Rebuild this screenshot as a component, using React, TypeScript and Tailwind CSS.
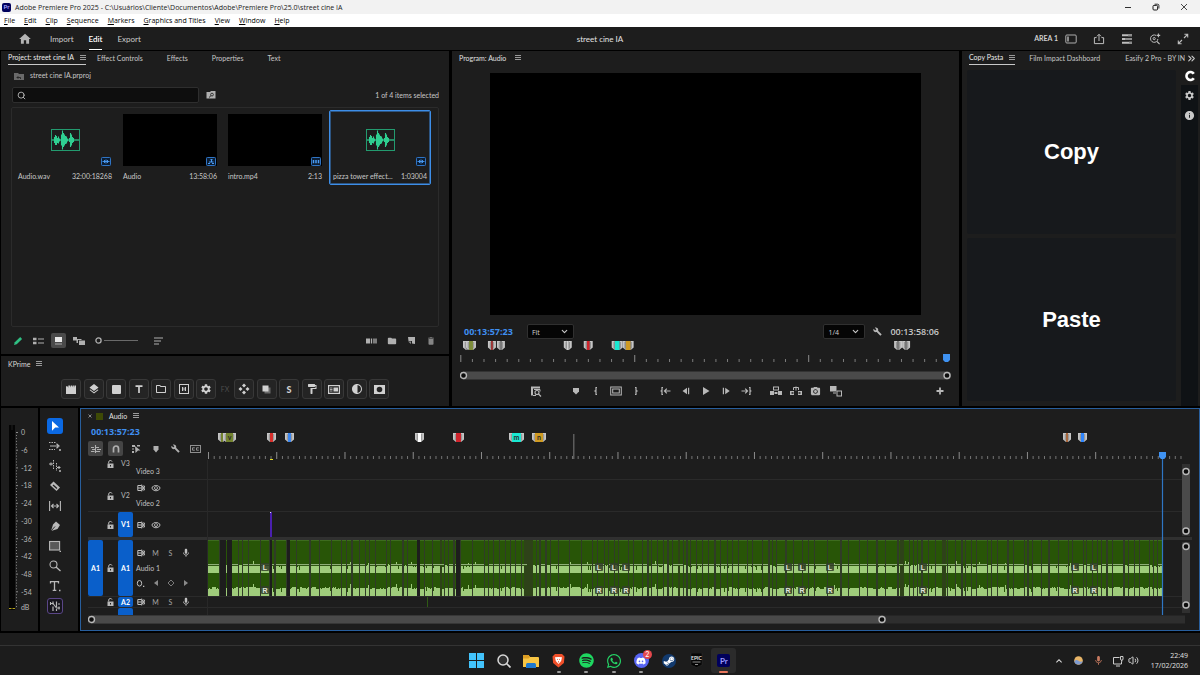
import React from "react";
import {
  MdHome, MdLayers, MdSettings, MdFormatPaint, MdContrast, MdOutlineFolder, MdMic, MdBuild, MdDelete,
  MdPhotoCamera, MdInfo, MdFolder, MdOutlineRemoveRedEye, MdKeyboardArrowUp,
} from "react-icons/md";
import { FaWhatsapp, FaSteamSymbol, FaDiscord, FaSpotify } from "react-icons/fa";
import { Search, ChevronDown, ChevronsRight, Volume2 } from "lucide-react";

type Kids = { children?: React.ReactNode };

function Glyph({ w = 12, h = 12, className = "", children }: Kids & { w?: number; h?: number; className?: string }) {
  return (
    <svg width={w} height={h} viewBox={`0 0 ${w} ${h}`} className={`shrink-0 ${className}`} fill="none" stroke="currentColor" aria-hidden="true">
      {children}
    </svg>
  );
}

function IconButton({ label, className = "", children }: Kids & { label: string; className?: string }) {
  return (
    <button type="button" aria-label={label} className={`flex shrink-0 items-center justify-center ${className}`}>
      {children}
    </button>
  );
}

function Burger() {
  return (
    <Glyph w={6} h={6} className="text-[#a8a8a8]">
      <path d="M0 .5h6M0 2.5h6M0 4.5h6" strokeWidth=".9" shapeRendering="crispEdges" />
    </Glyph>
  );
}

/* ---------- window chrome ---------- */

const menus = ["File", "Edit", "Clip", "Sequence", "Markers", "Graphics and Titles", "View", "Window", "Help"];

function TitleBar() {
  return (
    <div className="flex h-[14px] items-center bg-[#f2f2f2] text-[#1a1a1a]">
      <span className="ml-[2px] flex h-[9px] w-[9px] items-center justify-center rounded-[2px] bg-[#00005b] text-[6px] font-bold leading-none text-[#a8a8ff]">Pr</span>
      <h1 className="ml-1 flex-1 font-['Open_Sans'] text-[7px] leading-none">
        Adobe Premiere Pro 2025 - C:\Usuários\Cliente\Documentos\Adobe\Premiere Pro\25.0\street cine IA
      </h1>
      <IconButton label="Minimize" className="w-7">
        <Glyph w={8} h={8}><path d="M1 4.5h6" strokeWidth=".9" /></Glyph>
      </IconButton>
      <IconButton label="Restore" className="w-7">
        <Glyph w={8} h={8}><rect x="1" y="2.4" width="4.6" height="4.6" rx="1" /><path d="M2.6 1.2h3a1.3 1.3 0 0 1 1.3 1.3v3" strokeWidth=".9" /></Glyph>
      </IconButton>
      <IconButton label="Close" className="mr-[2px] w-7">
        <Glyph w={8} h={8}><path d="M1 1l6 6M7 1L1 7" strokeWidth=".8" /></Glyph>
      </IconButton>
    </div>
  );
}

function MenuBar() {
  return (
    <nav className="flex h-[13px] items-center gap-[9px] bg-white pl-1 font-['Open_Sans'] text-[7px] leading-none text-black">
      {menus.map((m) => (
        <button key={m} type="button"><span className="underline">{m[0]}</span>{m.slice(1)}</button>
      ))}
    </nav>
  );
}

function WorkspaceBar() {
  return (
    <header className="grid h-[23px] grid-cols-[1fr_auto_1fr] items-center bg-[#1d1d1d] text-[8px] text-[#cccccc]">
      <div className="flex h-full items-center pl-[18px]">
        <IconButton label="Home" className="w-[14px] text-[#b4b4b4]"><MdHome size={14} /></IconButton>
        <button type="button" className="ml-[18px]">Import</button>
        <button type="button" className="ml-[15px] h-full border-b border-white pt-px font-semibold text-white">Edit</button>
        <button type="button" className="ml-[15px]">Export</button>
      </div>
      <span className="text-[#e4e4e4]">street cine IA</span>
      <div className="flex items-center justify-end gap-4 pr-[11px] text-[#bdbdbd]">
        <div className="flex items-center gap-[7px]">
          <span className="text-[7px] font-bold text-[#d0d0d0]">AREA 1</span>
          <IconButton label="Workspaces">
            <Glyph><rect x=".8" y="2" width="10.4" height="8" rx="1" strokeWidth=".9" /><path d="M3 3.6v4.8" strokeWidth="1.4" /></Glyph>
          </IconButton>
        </div>
        <IconButton label="Quick export">
          <Glyph><path d="M3.6 4.6H1.4v6h9.2v-6H8.4M6 8V1.4M4 3.3l2-2 2 2" strokeWidth="1" /></Glyph>
        </IconButton>
        <IconButton label="Progress">
          <Glyph><path d="M1 2.3h10M1 6h10M1 9.7h10" strokeWidth="1.900" /><path d="M7 2.3h4M4 6h7M8 9.7h3" stroke="#8d8d8d" strokeWidth="1.900" /></Glyph>
        </IconButton>
        <IconButton label="Search help">
          <Glyph><path d="M7 2.400A3.700 3.700 0 1 0 8.900 6" strokeWidth="1" /><circle cx="5.2" cy="5.6" r="1.1" strokeWidth="1" /><path d="M8 8.5l2.6 2.6M9.4.6v3.6M7.6 2.400H11.200" strokeWidth="1.100" /></Glyph>
        </IconButton>
        <IconButton label="Full screen">
          <Glyph><path d="M7 5l3.500-3.500M7.4 1.3h3.3v3.3M5 7l-3.500 3.500M1.3 7.4v3.3h3.3" strokeWidth="1.1" /></Glyph>
        </IconButton>
      </div>
    </header>
  );
}

function ActiveTab({ children }: Kids) {
  return (
    <button type="button" className="flex h-[14px] shrink-0 items-center gap-[6px] whitespace-nowrap border-b border-[#c8c8c8] text-[#ececec]">
      {children}<Burger />
    </button>
  );
}

function Tab({ children }: Kids) {
  return <button type="button" className="shrink-0 whitespace-nowrap">{children}</button>;
}

/* ---------- project panel ---------- */

function AudioThumb() {
  return (
    <Glyph w={29} h={22} className="text-[#2fcf91]">
      <rect x=".5" y=".5" width="28" height="21" stroke="#239a6f" />
      <path d="M1 11h27" strokeWidth="1.2" />
      <path d="M3.5 8v6M4.5 6v10M5.5 7v9M6.5 9v5M7.5 7.500v7M8.500 9.500v3M10.500 6h1v10h-1zM11.500 1.500v19M12.500 4v14M13.500 5.500v11M14.500 7v8M15.500 7.500v7M16.500 9.500v3M18.500 9v4M19.500 4v14M20.500 5.500v11M21.500 8v6M22.500 9v4" strokeWidth="1.1" />
    </Glyph>
  );
}

type Clip = { name: string; time: string; kind: "audio" | "sequence" | "video"; selected?: boolean };

const clips: Clip[] = [
  { name: "Audio.wav", time: "32:00:18268", kind: "audio" },
  { name: "Audio", time: "13:58:06", kind: "sequence" },
  { name: "intro.mp4", time: "2:13", kind: "video" },
  { name: "pizza tower effect...", time: "1:03004", kind: "audio", selected: true },
];

function Badge({ kind }: { kind: Clip["kind"] }) {
  return (
    <Glyph w={10} h={9} className="absolute bottom-0 right-px text-[#4b9cf5]">
      <rect x=".5" y=".5" width="9" height="8" rx=".8" fill="#0b1d33" stroke="#2f74c4" />
      {kind === "audio" && <path d="M1.500 4.500h7M3.500 3v3M5 2.500v4M6.500 3v3" strokeWidth=".9" />}
      {kind === "sequence" && <path d="M2 6.500h2M6 6.500h2M4.500 2.500h2M3 5h4.500M5.500 3v2" strokeWidth="1.1" />}
      {kind === "video" && <path d="M2.500 3v3.200M5 3v3.200M7.500 3v3.200" strokeWidth="1.5" />}
    </Glyph>
  );
}

function ClipCard({ clip }: { clip: Clip }) {
  return (
    <li className={`w-[102px] shrink-0 rounded-[2px] border px-[3px] pb-px pt-[3px] ${clip.selected ? "border-[#3d8ee8] ring-1 ring-inset ring-[#3d8ee8]/50" : "border-transparent"}`}>
      <div className={`relative flex h-[52px] items-center justify-center ${clip.kind === "audio" ? "" : "bg-black"}`}>
        {clip.kind === "audio" && <AudioThumb />}
        <Badge kind={clip.kind} />
      </div>
      <div className="flex h-[17px] items-end justify-between whitespace-nowrap text-[7px] leading-[14px] text-[#c8c8c8]">
        <span>{clip.name}</span><span>{clip.time}</span>
      </div>
    </li>
  );
}

function ProjectPanel() {
  return (
    <section className="flex min-h-0 flex-1 flex-col bg-[#1d1d1d] text-[7px] text-[#c8c8c8]">
      <div className="flex h-4 items-start gap-[11px] pl-[7px]">
        <ActiveTab>Project: street cine IA</ActiveTab>
        <div className="flex h-[14px] items-center gap-6">
          <Tab>Effect Controls</Tab><Tab>Effects</Tab><Tab>Properties</Tab><Tab>Text</Tab>
        </div>
      </div>
      <div className="flex h-[17px] items-center gap-[6px] pl-[13px]">
        <Glyph w={10} h={8}><path d="M0 1h4l1 1h5v6H0z" fill="#6a6a6a" stroke="none" /><path d="M3 5.500h3.500M3 5.500l1.300-1.300M3 5.500l1.300 1.300M6.500 5.500v1.500" stroke="#1d1d1d" strokeWidth=".8" /></Glyph>
        <span>street cine IA.prproj</span>
      </div>
      <div className="mt-[3px] flex h-4 items-center pl-[11px] pr-[10px]">
        <label className="flex h-4 w-[187px] items-center gap-1 rounded-[2px] border border-[#2e2e2e] bg-[#0e0e0e] pl-1">
          <Search size={9} strokeWidth={2.2} />
          <input type="text" aria-label="Search project" className="min-w-0 flex-1 bg-transparent outline-none" />
        </label>
        <IconButton label="Filter bin" className="ml-[7px]">
          <Glyph w={10} h={8}><path d="M.5 1h3.500l1-1h4.500v7.500h-9z" fill="#b0b0b0" stroke="none" /><circle cx="6" cy="3.600" r="1.400" stroke="#1d1d1d" strokeWidth=".8" /><path d="M5 4.600L3 6.500" stroke="#1d1d1d" strokeWidth=".9" /></Glyph>
        </IconButton>
        <span className="ml-auto">1 of 4 items selected</span>
      </div>
      <ul className="mx-[10px] mt-1 flex min-h-0 flex-1 items-start gap-[3px] rounded-[2px] border border-[#2b2b2b] pl-[2px] pt-[2px]">
        {clips.map((c) => <ClipCard key={c.name} clip={c} />)}
      </ul>
      <div className="flex h-[27px] shrink-0 items-center pl-3 pr-[13px] text-[#b0b0b0]">
        <IconButton label="Toggle writable">
          <Glyph w={10} h={10}><path d="M1 9l.8-2.800L7.200 1l1.900 1.900L3.700 8.200z" fill="#2fbf83" stroke="none" /></Glyph>
        </IconButton>
        <IconButton label="List view" className="ml-[10px]">
          <Glyph w={11} h={8}><path d="M0 2h3.500M0 6h3.500" strokeWidth="2.600" /><path d="M5 2h6M5 6h6" strokeWidth="1" /></Glyph>
        </IconButton>
        <IconButton label="Icon view" className="ml-[7px] h-[15px] w-[15px] rounded-[2px] bg-[#4a4a4a]">
          <Glyph w={9} h={8}><path d="M1 0h7v5H1z" fill="#e8e8e8" stroke="none" /><path d="M1 7h7" stroke="#a8a8a8" /></Glyph>
        </IconButton>
        <IconButton label="Freeform view" className="ml-[7px]">
          <Glyph w={12} h={8}><path d="M0 0h4v3.500H0zM3.500 2h5v1H5v3H3.500zM6 3.500h6V8H6z" fill="#b0b0b0" stroke="none" /></Glyph>
        </IconButton>
        <div className="ml-[10px] flex items-center">
          <Glyph w={7} h={7}><circle cx="3.500" cy="3.500" r="2.600" strokeWidth="1.300" /></Glyph>
          <div className="ml-[2px] h-px w-[34px] bg-[#6a6a6a]" />
        </div>
        <IconButton label="Sort icons" className="ml-4">
          <Glyph w={9} h={8}><path d="M0 1h9M0 4h7M0 7h5" strokeWidth="1.200" /></Glyph>
        </IconButton>
        <div className="ml-auto flex items-center gap-[10px]">
          <IconButton label="Automate to sequence">
            <Glyph w={11} h={8}><path d="M0 1.500h4v5H0z" fill="#b0b0b0" stroke="none" /><path d="M5.500 1.500v5M8 1.500v5M10 1.500v5" strokeWidth="1.300" /></Glyph>
          </IconButton>
          <IconButton label="New bin"><MdFolder size={10} /></IconButton>
          <IconButton label="New item">
            <Glyph w={9} h={9}><path d="M1 1h7v7L5 7.500V5H1.500z" fill="#b0b0b0" stroke="none" /><path d="M1 5.500L4 8V5.500z" fill="#8a8a8a" stroke="none" /></Glyph>
          </IconButton>
          <IconButton label="Delete" className="text-[#858585]"><MdDelete size={10} /></IconButton>
        </div>
      </div>
    </section>
  );
}

/* ---------- KPrime ---------- */

const kLeft: [string, React.ReactNode][] = [
  ["Clip", <Glyph key="c" w={10} h={9}><path d="M0 1.200h1.500l.8 1.500V.5h1.600l.8 2V.5h1.600l.8 2V.5h1.400l.5 2.200V.5H10V9H0z" fill="currentColor" stroke="none" /></Glyph>],
  ["Layers", <MdLayers key="l" size={12} />],
  ["Solid", <Glyph key="s" w={9} h={9}><rect width="9" height="9" rx="1" fill="currentColor" stroke="none" /></Glyph>],
  ["Text", <Glyph key="t" w={8} h={8}><path d="M.5 1.200h7M4 1v7" strokeWidth="1.700" /></Glyph>],
  ["Folder", <MdOutlineFolder key="f" size={12} />],
  ["Frame", <Glyph key="fr" w={10} h={10}><rect x=".5" y=".5" width="9" height="9" strokeWidth="1" /><path d="M3.500 3v4M6.500 3v4M5 3.500v3" strokeWidth="1" /></Glyph>],
  ["Settings", <MdSettings key="g" size={12} />],
];

const kRight: [string, React.ReactNode][] = [
  ["Anchor", <Glyph key="a" w={12} h={12}><path d="M6 .5l2 2-2 2-2-2zM6 7.500l2 2-2 2-2-2zM2.500 4l2 2-2 2-2-2zM9.500 4l2 2-2 2-2-2z" fill="currentColor" stroke="none" /></Glyph>],
  ["Shadow", <Glyph key="sh" w={9} h={9}><rect x="2.500" y="2.500" width="6" height="6" fill="#6a6a6a" stroke="none" /><rect x=".5" y=".5" width="6" height="6" fill="currentColor" stroke="none" /></Glyph>],
  ["Style", <span key="st" className="text-[9px] font-black leading-none">S</span>],
  ["Paint", <MdFormatPaint key="p" size={12} />],
  ["Panel", <Glyph key="pa" w={12} h={9}><rect x=".6" y=".6" width="10.800" height="7.800" strokeWidth="1.200" /><path d="M2 3h2.500M2 4.500h2.500M2 6h2.500" strokeWidth=".8" /><path d="M5.500 2.500h4.500v4H5.500z" fill="currentColor" stroke="none" /></Glyph>],
  ["Contrast", <MdContrast key="co" size={12} />],
  ["Mask", <Glyph key="m" w={11} h={9}><path d="M0 0h11v9H0zM5.500 1.700a2.800 2.800 0 1 0 0 5.600 2.800 2.800 0 0 0 0-5.600z" fill="currentColor" fillRule="evenodd" stroke="none" /></Glyph>],
];

function KGroup({ items }: { items: [string, React.ReactNode][] }) {
  return (
    <div className="flex w-[155px] justify-between">
      {items.map(([label, icon]) => (
        <IconButton key={label} label={label} className="h-5 w-5 rounded-[3px] border border-[#383838] bg-[#242424] text-[#d0d0d0]">{icon}</IconButton>
      ))}
    </div>
  );
}

function KPrimePanel() {
  return (
    <section className="h-[50px] shrink-0 bg-[#1d1d1d] text-[7px] text-[#d8d8d8]">
      <div className="flex h-4 items-center gap-[6px] pl-[7px]">KPrime <Burger /></div>
      <div className="mt-[7px] flex items-center justify-center">
        <KGroup items={kLeft} />
        <span className="w-[18px] text-center text-[7px] leading-[10px] text-[#4c4c4c]">FX</span>
        <KGroup items={kRight} />
      </div>
    </section>
  );
}

/* ---------- markers, shared by monitor and timeline ---------- */

type Marker = { x: number; w: number; color: string; label?: string };

function MarkerShape({ m, y }: { m: Marker; y: number }) {
  return (
    <g transform={`translate(${m.x} ${y})`} stroke="none">
      <path d={`M3 0h${m.w - 6}v9h-${m.w - 6}z`} fill={m.color} />
      <path d="M0 0h3v9L0 6.500z" fill="#c6c6c6" />
      <path d={`M${m.w} 0h-3v9l3-2.500z`} fill="#c6c6c6" />
      <path d={`M2.300 1v6.500M${m.w - 2.3} 1v6.500`} stroke="#6a6a6a" strokeWidth=".6" />
      {m.label && <text x={m.w / 2} y="7" textAnchor="middle" fontSize="7" fontWeight="700" fill="#2a2a2a">{m.label}</text>}
    </g>
  );
}

const monitorMarkers: Marker[] = [
  { x: 3, w: 7, color: "#8a8a8a" }, { x: 6, w: 10, color: "#7d8c3a" }, { x: 28, w: 8, color: "#a03434" }, { x: 37, w: 8, color: "#7a7a7a" },
  { x: 104, w: 8, color: "#d0d0d0" }, { x: 124, w: 9, color: "#d0242c" }, { x: 152, w: 11, color: "#19e8d2" }, { x: 163, w: 11, color: "#cf9a22" },
  { x: 435, w: 8, color: "#7a7a7a" }, { x: 443, w: 8, color: "#7a7a7a" },
];

const timelineMarkers: Marker[] = [
  { x: 10, w: 8, color: "#74832f" }, { x: 15, w: 13, color: "#74832f", label: "v" }, { x: 59, w: 9, color: "#d8302c" }, { x: 77, w: 9, color: "#3b86ee" },
  { x: 207, w: 9, color: "#fff" }, { x: 245, w: 11, color: "#d0242c" }, { x: 301, w: 15, color: "#19e8d2", label: "m" },
  { x: 324, w: 14, color: "#cf9a22", label: "n" }, { x: 855, w: 8, color: "#a8683e" }, { x: 870, w: 9, color: "#2f86ff" },
];

function Knob({ x, y }: { x: number; y: number }) {
  return <circle cx={x} cy={y} r="3" fill="#0c0c0c" stroke="#b8b8b8" strokeWidth="1.400" />;
}

/* ---------- program monitor ---------- */

function Picker({ label, options, className }: { label: string; options: string[]; className: string }) {
  return (
    <div className={`relative h-[15px] rounded-[2px] border border-[#303030] bg-[#050505] ${className}`}>
      <select aria-label={label} className="h-full w-full appearance-none bg-transparent pl-1 text-[7px] leading-none text-[#d0d0d0] outline-none">
        {options.map((o) => <option key={o}>{o}</option>)}
      </select>
      <ChevronDown size={9} strokeWidth={3} className="pointer-events-none absolute right-1 top-[2px] text-[#c8c8c8]" />
    </div>
  );
}

const markTools: [string, React.ReactNode][] = [
  ["Add marker", <path key="1" d="M3 3h6v3.500L6 9.500 3 6.500z" fill="currentColor" stroke="none" />],
  ["Mark in", <path key="2" d="M7 2.500H6v3L5 6l1 .5v3h1" strokeWidth="1.200" />],
  ["Safe margins", <g key="3"><rect x=".7" y="2" width="10.600" height="8" strokeWidth="1" /><rect x="2.700" y="4" width="6.600" height="4" strokeWidth="1" /></g>],
  ["Mark out", <path key="4" d="M5 2.500h1v3l1 .5-1 .5v3H5" strokeWidth="1.200" />],
];
const playTools: [string, React.ReactNode][] = [
  ["Go to in", <path key="1" d="M3 2.500H2v3l-.8.5.8.500v3h1M10.500 6h-6M6.800 3.700L4.500 6l2.300 2.300" strokeWidth="1.200" />],
  ["Step back", <path key="2" d="M7 2.700v6.600L2.500 6zM8 2.700h1.200v6.600H8z" fill="currentColor" stroke="none" />],
  ["Play", <path key="3" d="M3 2l6.500 4L3 10z" fill="currentColor" stroke="none" />],
  ["Step forward", <path key="4" d="M5.200 2.700L9.700 6 5.200 9.300zM2.800 2.700H4v6.600H2.800z" fill="currentColor" stroke="none" />],
  ["Go to out", <path key="5" d="M9 2.500h1v3l.8.5-.8.500v3H9M1.500 6h6M5.200 3.700L7.500 6 5.200 8.300" strokeWidth="1.200" />],
];
const editTools: [string, React.ReactNode][] = [
  ["Lift", <g key="1"><path d="M0 6h4v4H0zM8 6h4v4H8zM4.500 7h3v2h-3z" fill="currentColor" stroke="none" /><rect x="3.500" y="2" width="5" height="3" strokeWidth="1" /></g>],
  ["Extract", <g key="2"><path d="M0 6h4v4H0zM8 6h4v4H8z" fill="currentColor" stroke="none" /><path d="M1.500 7.200h2v1.600h-2zM8.500 7.200h2v1.600h-2z" fill="#1d1d1d" stroke="none" /><path d="M3.500 5V2.500h5V5M6 1.500v4" strokeWidth="1" /></g>],
  ["Export frame", null],
  ["Comparison view", <g key="4"><path d="M0 1h6.500v5.500H0z" fill="currentColor" stroke="none" /><rect x="7" y="6" width="4.500" height="5" strokeWidth="1" /><path d="M3 8h3" strokeWidth="1" /></g>],
];

function ToolRow({ tools }: { tools: [string, React.ReactNode][] }) {
  return (
    <div className="flex">
      {tools.map(([label, art]) => (
        <IconButton key={label} label={label} className="h-4 w-5">
          {art ? <Glyph>{art}</Glyph> : <MdPhotoCamera size={11} />}
        </IconButton>
      ))}
    </div>
  );
}

function ProgramPanel() {
  return (
    <section className="flex min-h-0 min-w-0 flex-col bg-[#1d1d1d] text-[7px]">
      <div className="flex h-[14px] items-center gap-[9px] pl-[7px] text-[#e0e0e0]">Program: Audio <Burger /></div>
      <div className="mt-2 flex min-h-0 flex-1 justify-center px-2">
        <div className="aspect-video h-full bg-black" />
      </div>
      <div className="mt-[9px] flex h-[15px] items-center pl-3 pr-5 font-['Open_Sans'] text-[9px]">
        <span className="font-bold text-[#3f8ff0]">00:13:57:23</span>
        <Picker label="Zoom level" options={["Fit", "50%", "100%"]} className="ml-[14px] w-[47px]" />
        <Picker label="Playback resolution" options={["1/4", "1/2", "Full"]} className="ml-auto w-[42px]" />
        <IconButton label="Settings" className="ml-2 text-[#b8b8b8]"><MdBuild size={9} /></IconButton>
        <span className="ml-2 font-semibold text-[#c8c8c8]">00:13:58:06</span>
      </div>
      <svg height="24" viewBox="0 0 492 24" preserveAspectRatio="none" className="mx-2 mt-px" aria-label="Program ruler">
        {monitorMarkers.map((m) => <MarkerShape key={m.x} m={m} y={1} />)}
        {Array.from({ length: 42 }, (_, i) => (
          <rect key={i} x={i * 11.62 + 0.3} y={i % 15 ? 19 : 15} width="1" height={i % 15 ? 3 : 7} fill={i % 15 ? "#7c7c7c" : "#8c8c8c"} />
        ))}
        <path d="M484 14h7v6l-2 2h-3l-2-2z" fill="#3f92f2" />
      </svg>
      <svg height="9" viewBox="0 0 492 9" preserveAspectRatio="none" className="mx-2 mt-[7px]" aria-label="Program zoom bar">
        <rect y=".5" width="492" height="8" rx="4" fill="#4a4a4a" />
        <Knob x={3.5} y={4.5} /><Knob x={488} y={4.5} />
      </svg>
      <div className="mb-[7px] mt-[3px] grid grid-cols-[1fr_auto_1fr] items-center text-[#b8b8b8]">
        <IconButton label="Frame search" className="mr-6 justify-self-end">
          <Glyph><path d="M1 1.500h9v2H3v7H1z" fill="currentColor" stroke="none" /><path d="M4 4.500h6v2" strokeWidth="1" /><circle cx="7" cy="7.500" r="2" strokeWidth="1.100" /><path d="M8.500 9l2.500 2.500M3 10.500h3" strokeWidth="1.200" /></Glyph>
        </IconButton>
        <div className="flex gap-[10px]"><ToolRow tools={markTools} /><ToolRow tools={playTools} /><ToolRow tools={editTools} /></div>
        <IconButton label="Button editor" className="mr-[13px] justify-self-end"><Glyph><path d="M6 2.500v7M2.500 6h7" strokeWidth="1.800" /></Glyph></IconButton>
      </div>
    </section>
  );
}

/* ---------- extension panel ---------- */

function CopyPastaPanel() {
  return (
    <section className="flex min-h-0 min-w-0 flex-col bg-[#1d1d1d] text-[7px] text-[#c8c8c8]">
      <div className="flex h-4 items-start pl-[7px] pr-[3px]">
        <ActiveTab>Copy Pasta</ActiveTab>
        <div className="flex h-[14px] min-w-0 flex-1 items-center gap-[25px] overflow-hidden pl-[14px]">
          <Tab>Film Impact Dashboard</Tab><Tab>Easify 2 Pro - BY IN</Tab>
        </div>
        <IconButton label="More tabs" className="h-[14px] w-3"><ChevronsRight size={11} strokeWidth={2.5} /></IconButton>
      </div>
      <div className="flex min-h-0 flex-1">
        <div className="flex flex-1 flex-col gap-1 pb-[5px] pl-[5px] pt-[3px] font-['Liberation_Sans'] text-[22px] font-bold text-white">
          <button type="button" className="flex-1 rounded-[2px] bg-[#17191c]">Copy</button>
          <button type="button" className="flex-1 rounded-[2px] bg-[#17191c]">Paste</button>
        </div>
        <div className="ml-[5px] flex w-[17px] flex-col items-center text-[#c8c8c8]">
          <IconButton label="Copy Pasta home" className="h-[18px] w-full text-white">
            <Glyph><path d="M9.800 3.800A4 4 0 1 0 9.800 8.200" strokeWidth="2.600" /></Glyph>
          </IconButton>
          <div className="flex w-full flex-1 flex-col bg-[#0f1215]">
            <IconButton label="Preferences" className="h-5 w-full"><MdSettings size={11} /></IconButton>
            <IconButton label="About" className="h-5 w-full"><MdInfo size={11} /></IconButton>
          </div>
        </div>
        <div className="w-[2px]" />
      </div>
    </section>
  );
}

/* ---------- meters and tools ---------- */

const levels = ["0", "-6", "-12", "-18", "-24", "-30", "-36", "-42", "-48", "-54"];

function Meters() {
  return (
    <section aria-label="Audio meters" className="flex bg-[#1d1d1d] pl-2 pt-[17px] text-[7px] leading-[8px] text-[#b8b8b8]">
      <svg width="10" height="186" viewBox="0 0 10 186" aria-hidden="true">
        <rect width="6" height="185" fill="#050505" />
        <path d="M3 0v5" stroke="#333" strokeWidth=".6" />
        {Array.from({ length: 60 }, (_, i) => <rect key={i} x="7" y={7 + i * 2.95} width={i % 6 ? 1 : 2} height="1" fill="#8a8a8a" />)}
        <path d="M0 183.500h2.500M3.500 183.500H6" stroke="#b5a21c" />
      </svg>
      <div className="ml-[2px] mt-[3px] flex h-[183px] flex-col">
        <div className="flex h-[168px] flex-col justify-between">{levels.map((l) => <span key={l}>{l}</span>)}</div>
        <span className="mt-[7px]">dB</span>
      </div>
    </section>
  );
}

const tools: [string, React.ReactNode][] = [
  ["Selection", <path key="1" d="M3 1l7 6.500H6.200L3 10.800z" fill="#fff" stroke="none" />],
  ["Track select forward", <g key="2"><path d="M0 2.500h7M0 9.500h6" strokeDasharray="1.500 1" /><path d="M1 6h8M7.500 3.800L10 6 7.500 8.200" strokeWidth="1.200" /><path d="M10 10h2" strokeWidth="1.500" /></g>],
  ["Ripple edit", <g key="3"><path d="M4.500 0v9M7.500 3v8" strokeDasharray="1.500 1" /><path d="M0 4h4M8 7.500h3.500M2 2.500v3M10 6v3" strokeWidth="1.100" /><path d="M10 11h2" strokeWidth="1.500" /></g>],
  ["Razor", <g key="4"><path d="M4.500 1.500L11 7.500 7.500 11 1 5z" fill="currentColor" stroke="none" /><path d="M4 5l4 3.500" stroke="#1d1d1d" strokeWidth="1.200" /></g>],
  ["Slip", <g key="5"><path d="M.6 1v10M11.400 1v10M2.500 6h7M4.500 4l-2 2 2 2M7.500 4l2 2-2 2" strokeWidth="1.100" /></g>],
  ["Pen", <g key="6"><path d="M7 1.500L11 5 8.500 9 2 11l2-6.500z" fill="currentColor" stroke="none" /><path d="M2 11l4-4.500" stroke="#1d1d1d" strokeWidth=".9" /></g>],
  ["Rectangle", <g key="7"><rect x=".6" y="1.500" width="10" height="8.500" fill="#5a5a5a" strokeWidth="1.100" /><path d="M10.500 11.300h1.500" strokeWidth="1.300" /></g>],
  ["Zoom", <g key="8"><circle cx="4.500" cy="4.500" r="3.500" strokeWidth="1.100" /><path d="M7 7l4.500 4" strokeWidth="1.400" /></g>],
  ["Type", <g key="9"><path d="M1.500 3.500V1.600h8v1.900M5.500 1.600v9M3.700 10.400h3.600" strokeWidth="1.300" /><path d="M10 10.500h1.500" strokeWidth="1.400" /></g>],
  ["Remix", <g key="10"><path d="M4 1.500v3M4 6.500v4.500M7.500 1.500V7M7.500 9v2" strokeWidth="1.200" /><path d="M1 3.500h3l3.500 4.500H11M9 4h2M1.500 2v3M10 6.500v3" strokeWidth="1.100" /></g>],
];

function Tools() {
  return (
    <section aria-label="Tools" className="flex flex-col items-center gap-1 bg-[#1d1d1d] pr-2 pt-[10px] text-[#b8b8b8]">
      {tools.map(([label, art], i) => (
        <IconButton
          key={label}
          label={label}
          className={`h-4 w-4 rounded-[3px] ${i === 0 ? "bg-[#0b69e3]" : ""} ${i === 9 ? "border border-[#5a4687] bg-[#17151d]" : ""}`}
        >
          <Glyph>{art}</Glyph>
        </IconButton>
      ))}
    </section>
  );
}

/* ---------- timeline ---------- */

function Lock() {
  return (
    <div className="flex w-[15px] shrink-0 items-center justify-center">
      <Glyph w={7} h={8} className="text-[#b8b8b8]"><path d="M.5 3.500h6V8h-6zM3 5h1v1.500H3z" fill="currentColor" fillRule="evenodd" stroke="none" /><path d="M1.700 3.500V2a1.700 1.700 0 0 1 3.300-.4" strokeWidth="1" /></Glyph>
    </div>
  );
}

function SyncLock() {
  return (
    <IconButton label="Sync lock" className="h-[15px] w-[15px]">
      <Glyph w={8} h={8}><path d="M4.500 1.500H.8v5h3.700M.8 4h3.500" strokeWidth="1" /><path d="M5.500 2h2v1.500h-2zM5.500 4.500h2V6h-2zM4.700.5v7" strokeWidth=".9" /></Glyph>
    </IconButton>
  );
}

function Target({ on, children }: Kids & { on?: boolean }) {
  return (
    <button type="button" className={`flex w-[15px] shrink-0 items-center justify-center self-stretch rounded-[2px] text-[7px] ${on ? "bg-[#0a5fca] font-bold text-white" : "text-[#b8b8b8]"}`}>
      {children}
    </button>
  );
}

function VideoHeader({ id, name }: { id: string; name: string }) {
  return (
    <div className="flex h-[31px] shrink-0 items-center">
      <div className="w-[15px]" /><Lock /><Target>{id}</Target>
      <div>
        <div className="flex"><SyncLock /><IconButton label={`Toggle ${name}`} className="h-[15px] w-[15px]"><MdOutlineRemoveRedEye size={10} /></IconButton></div>
        <div className="pl-[3px] leading-[15px]">{name}</div>
      </div>
    </div>
  );
}

function AudioControls() {
  return (
    <div className="flex">
      <SyncLock />
      <button type="button" className="h-[15px] w-[15px] text-[#a4a4a4]">M</button>
      <button type="button" className="h-[15px] w-[15px] text-[#a4a4a4]">S</button>
      <IconButton label="Voice-over" className="h-[15px] w-[15px]"><MdMic size={10} /></IconButton>
    </div>
  );
}

function TrackHeaders() {
  return (
    <div className="w-[127px] shrink-0 border-r border-[#282828] pl-[7px] text-[7px] leading-none text-[#c0c0c0]">
      <div className="flex h-5 flex-col justify-end overflow-hidden border-b border-[#2a2a2a]"><VideoHeader id="V3" name="Video 3" /></div>
      <div className="h-8 border-b border-[#2a2a2a]"><VideoHeader id="V2" name="Video 2" /></div>
      <div className="flex h-[25px] items-center">
        <div className="w-[15px]" /><Lock /><Target on>V1</Target><SyncLock />
        <IconButton label="Toggle V1" className="h-[15px] w-[15px]"><MdOutlineRemoveRedEye size={10} /></IconButton>
      </div>
      <div className="h-[3px] bg-[#303030]" />
      <div className="flex h-[57px] items-center border-b border-[#2a2a2a]">
        <Target on>A1</Target><Lock /><Target on>A1</Target>
        <div>
          <AudioControls />
          <div className="pl-[3px] leading-[15px]">Audio 1</div>
          <div className="flex">
            <IconButton label="Keyframes" className="h-[15px] w-[15px]"><Glyph w={9} h={9}><ellipse cx="3.500" cy="4.300" rx="2.200" ry="2.800" strokeWidth="1" /><path d="M7 7.300h1.300" strokeWidth="1.200" /></Glyph></IconButton>
            <IconButton label="Previous keyframe" className="h-[15px] w-[15px] text-[#8a8a8a]"><Glyph w={6} h={8}><path d="M5 1v6L1 4z" fill="currentColor" stroke="none" /></Glyph></IconButton>
            <IconButton label="Add keyframe" className="h-[15px] w-[15px] text-[#7a7a7a]"><Glyph w={8} h={8}><path d="M4 1l3 3-3 3-3-3z" /></Glyph></IconButton>
            <IconButton label="Next keyframe" className="h-[15px] w-[15px] text-[#8a8a8a]"><Glyph w={6} h={8}><path d="M1 1v6l4-3z" fill="currentColor" stroke="none" /></Glyph></IconButton>
          </div>
        </div>
      </div>
      <div className="flex h-[11px] items-center border-b border-[#2a2a2a]"><div className="w-[15px]" /><Lock /><Target on>A2</Target><AudioControls /></div>
      <div className="flex h-[7px]"><div className="ml-[30px] w-[15px] rounded-t-[2px] bg-[#0a5fca]" /></div>
    </div>
  );
}

const gaps: [number, number][] = [[12, 18], [19, 24], [62, 64], [79, 82], [209, 212], [248, 252]];
const quiet: [number, number][] = [[316, 325], [692, 696], [734, 738], [470, 472], [232, 234]];
const channelTags = [57, 391, 406, 418, 580, 594, 622, 715, 867, 886];

function noise(n: number) {
  const s = Math.sin(n * 127.1 + 11.7) * 43758.5453;
  return s - Math.floor(s);
}

const inside = (list: [number, number][], x: number) => list.some(([a, b]) => x >= a && x < b);

type Segment = { x: number; w: number };

function buildSegments(): Segment[] {
  const out: Segment[] = [];
  let x = 0;
  let i = 1;
  while (x < 954) {
    const r = noise(i);
    const w = Math.min(r > 0.65 ? 7 + Math.round(noise(i + 900) * 5) : 2 + Math.round(r * 6), 954 - x);
    out.push({ x, w });
    x += w + (noise(i + 300) > 0.85 ? 2 : 1);
    i += 1;
  }
  return out;
}

const segments = buildSegments();
const columns = segments.flatMap((s) => Array.from({ length: s.w }, (_, k) => s.x + k)).filter((x) => !inside(gaps, x) && !inside(quiet, x));

function wave(base: number, lift: number) {
  return columns
    .map((x) => {
      const block = noise(Math.floor(x / 4) + 3);
      const n = noise(x + 50);
      const tall = n > 0.975 ? 3 : 0;
      const low = n < 0.05 ? 3 : 0;
      const h = Math.round(lift + block * 2 + n + tall - low);
      return `M${x} ${base}v-${h}h1v${h}z`;
    })
    .join("");
}

const waveL = wave(113, 6);
const waveR = wave(136, 6.5);

function TrackCanvas() {
  return (
    <svg height="155" viewBox="0 0 974 155" preserveAspectRatio="none" className="min-w-0 flex-1" aria-label="Sequence tracks">
      <path d="M0 19.500h974M0 51.500h974M0 136.500h974M0 147.500h974" stroke="#2a2a2a" />
      <rect y="77" width="974" height="3" fill="#303030" />
      <rect x="62" y="52" width="2" height="25" fill="#4a1fae" />
      <rect x="62" y="52" width="1" height="1" fill="#d8d8ff" />
      <rect y="80" width="954" height="56" fill="#303c27" />
      {segments.map((s) => <rect key={s.x} x={s.x} y="80" width={s.w} height="56" fill="#285507" />)}
      {segments.map((s) => <rect key={s.x} x={s.x} y="80" width={s.w} height="1" fill="#3d6b1e" />)}
      {quiet.map(([a, b]) => <rect key={a} x={a} y="80" width={b - a} height="56" fill="#2e4219" />)}
      <path d={waveL} fill="#9fcc7b" />
      <path d={waveR} fill="#9fcc7b" />
      {segments.filter((s) => s.w > 3 && !inside(quiet, s.x)).map((s) => (
        <g key={s.x}>
          <rect x={s.x} y="104" width={s.w} height="1" fill="#8fae78" />
          <rect x={s.x} y="105" width={s.w} height="1" fill="#2f5512" />
        </g>
      ))}
      {gaps.map(([a, b]) => <rect key={a} x={a} y="80" width={b - a} height="56" fill="#1d1d1d" />)}
      <rect x="219" y="137" width="1" height="10" fill="#2f5a14" />
      <g fontSize="7" fontWeight="700" fontFamily="Liberation Sans, sans-serif" textAnchor="middle" fill="#e2e6dd">
        {channelTags.map((x) => (
          <g key={x}>
            <rect x={x - 4} y="103" width="8" height="8" rx="1" fill="#33402a" fillOpacity=".85" />
            <text x={x} y="109.500">L</text>
            <rect x={x - 4} y="126" width="8" height="8" rx="1" fill="#33402a" fillOpacity=".85" />
            <text x={x} y="132.500">R</text>
          </g>
        ))}
      </g>
      <path d="M954.500 0v155" stroke="#2f76c4" strokeWidth="1.200" />
    </svg>
  );
}

function Ruler() {
  return (
    <svg height="30" viewBox="0 0 991 30" preserveAspectRatio="none" className="min-w-0 flex-1 self-end" aria-label="Time ruler">
      {timelineMarkers.map((m) => <MarkerShape key={m.x} m={m} y={3} />)}
      {Array.from({ length: 172 }, (_, i) => (
        <rect key={i} x={i * 5.687} y={i % 12 ? 26 : 22} width="1" height={i % 12 ? 3 : 7} fill={i % 12 ? "#757575" : "#8c8c8c"} />
      ))}
      <rect x="365" y="4" width="1.500" height="25" fill="#5c5c5c" />
      <rect x="62" y="29" width="3" height="1" fill="#e8e020" />
      <path d="M954.500 28v2" stroke="#2f76c4" strokeWidth="1.200" />
      <path d="M951 22h7v5l-2 2h-3l-2-2z" fill="#3f92f2" />
    </svg>
  );
}

function Timeline() {
  return (
    <section className="flex min-w-0 flex-col border border-[#285e9c] bg-[#1d1d1d] text-[7px] text-[#b8b8b8]">
      <div className="flex h-[51px]">
        <div className="w-[127px] shrink-0 pl-[7px]">
          <div className="flex h-[14px] items-center">
            <IconButton label="Close sequence"><Glyph w={4} h={4}><path d="M.5.5l3 3M3.500.5l-3 3" strokeWidth=".7" /></Glyph></IconButton>
            <span className="ml-[4px] h-[7px] w-[7px] bg-[#3e4a06]" />
            <span className="ml-[6px] mr-[6px] text-[#e0e0e0]">Audio</span><Burger />
          </div>
          <div className="flex h-[18px] items-center pl-[3px] font-['Open_Sans'] text-[9px] font-bold text-[#3f8ff0]">00:13:57:23</div>
          <div className="flex h-[15px] items-center gap-[5px] text-[#b0b0b0]">
            <IconButton label="Nest sequences" className="h-[15px] w-[15px] rounded-[2px] bg-[#454545]"><Glyph w={10} h={10}><path d="M0 3.500h3M4 3.500h4M1 5.500h3.500M6 5.500h4M0 7.500h3.500M5 7.500h4M4.500 1v8" strokeWidth="1.100" /></Glyph></IconButton>
            <IconButton label="Snap" className="h-[15px] w-[15px] rounded-[2px] bg-[#454545]"><Glyph w={10} h={10}><path d="M2.500 8.500V4.500a2.500 2.500 0 0 1 5 0v4" strokeWidth="1.700" /></Glyph></IconButton>
            <IconButton label="Linked selection" className="h-[15px] w-[15px]"><Glyph w={10} h={10}><path d="M1 1h3v2H1zM6 1h3v1.500H6zM1 7h2v2H1zM4 2l5.500 4.500H7L4.500 9z" fill="currentColor" stroke="none" /><path d="M1 5h2" /></Glyph></IconButton>
            <IconButton label="Add marker" className="h-[15px] w-[15px]"><Glyph w={8} h={8}><path d="M1.500 1h5v3.500L4 7.500 1.500 4.500z" fill="currentColor" stroke="none" /></Glyph></IconButton>
            <IconButton label="Timeline settings" className="h-[15px] w-[15px]"><MdBuild size={9} /></IconButton>
            <IconButton label="Captions" className="h-[15px] w-[15px] text-[#8f8f8f]"><Glyph w={11} h={8}><rect x=".5" y=".5" width="10" height="7" /><path d="M4.800 2.800H2.500v2.400h2.300M8.800 2.800H6.500v2.400h2.300" /></Glyph></IconButton>
          </div>
        </div>
        <Ruler />
      </div>
      <div className="flex">
        <TrackHeaders />
        <TrackCanvas />
        <svg width="17" height="155" viewBox="0 0 17 155" aria-label="Vertical zoom bars">
          <rect y="4" width="8" height="72" fill="#303030" />
          <rect y="8" width="8" height="67" rx="4" fill="#4a4a4a" />
          <rect y="77" width="10" height="3" fill="#303030" />
          <rect y="82" width="8" height="71" fill="#303030" />
          <rect y="82" width="8" height="67" rx="4" fill="#4a4a4a" />
          <Knob x={4} y={11.5} /><Knob x={4} y={71} /><Knob x={4} y={86.5} /><Knob x={4} y={145} />
        </svg>
      </div>
      <svg height="9" viewBox="0 0 1097 9" preserveAspectRatio="none" className="ml-[7px] mr-[14px]" aria-label="Timeline zoom bar">
        <rect y=".5" width="1097" height="8" fill="#2e2e2e" />
        <rect y=".5" width="798" height="8" rx="4" fill="#4a4a4a" />
        <Knob x={3.5} y={4.5} /><Knob x={794} y={4.5} />
      </svg>
    </section>
  );
}

/* ---------- taskbar ---------- */

function TaskButton({ label, running, active, children }: Kids & { label: string; running?: boolean; active?: boolean }) {
  return (
    <IconButton label={label} className={`relative h-[25px] w-[25px] rounded-[3px] ${active ? "bg-[#2b2b2b]" : ""}`}>
      {children}
      {running && <span className={`absolute bottom-0 h-[2px] rounded-full ${active ? "w-[9px] bg-[#e8765c]" : "w-[4px] bg-[#9a9a9a]"}`} />}
    </IconButton>
  );
}

function Taskbar() {
  return (
    <footer className="grid h-[30px] shrink-0 grid-cols-[1fr_auto_1fr] items-center border-t border-[#333] bg-[#1c1c1c]">
      <div />
      <div className="flex w-[273px] justify-between">
        <TaskButton label="Start">
          <Glyph w={15} h={15}><path d="M0 0h7v7H0zM8 0h7v7H8zM0 8h7v7H0zM8 8h7v7H8z" fill="#42c3fb" stroke="none" /></Glyph>
        </TaskButton>
        <TaskButton label="Search">
          <Glyph w={14} h={14} className="text-[#d8d8d8]"><circle cx="6" cy="6" r="5" fill="#303030" strokeWidth="1.500" /><path d="M9.500 9.500l4 4" strokeWidth="1.700" /></Glyph>
        </TaskButton>
        <TaskButton label="File Explorer">
          <Glyph w={16} h={14}><path d="M0 2q0-1 1-1h4.500L7 3h8q1 0 1 1v9H0z" fill="#f7c544" stroke="none" /><path d="M0 2q0-1 1-1h4.500L7 3 5.500 4.500H0z" fill="#dc9c22" stroke="none" /><path d="M3 14v-3.500q0-1.500 1.500-1.500h7q1.500 0 1.500 1.500V14z" fill="#1c78cf" stroke="none" /></Glyph>
        </TaskButton>
        <TaskButton label="Brave" running>
          <svg width="13" height="15" viewBox="0 0 13 15" aria-hidden="true"><path d="M3 1h7l2.500 2.500-.6 6.500L6.500 14.500 1.100 10 .5 3.500z" fill="#f0502a" /><path d="M6.500 4l3.500.2-.8 3.800-2.700 3-2.700-3L3 4.200z" fill="#fff" /><path d="M5 6l1 .8M8 6l-1 .8M6.500 8v1.500" stroke="#f0502a" strokeWidth=".8" /></svg>
        </TaskButton>
        <TaskButton label="Spotify" running><FaSpotify size={15} className="text-[#1ed760]" /></TaskButton>
        <TaskButton label="WhatsApp" running><FaWhatsapp size={16} className="text-[#25d366]" /></TaskButton>
        <TaskButton label="Discord" running>
          <span className="flex h-[15px] w-[15px] items-center justify-center rounded-full bg-[#5865f2] text-white"><FaDiscord size={10} /></span>
          <span className="absolute right-[2px] top-[2px] flex h-[9px] w-[9px] items-center justify-center rounded-full bg-[#e5484d] text-[7px] leading-none text-white">2</span>
        </TaskButton>
        <TaskButton label="Steam">
          <span className="flex h-[14px] w-[14px] items-center justify-center rounded-full bg-[#123a6e] text-white"><FaSteamSymbol size={12} /></span>
        </TaskButton>
        <TaskButton label="Epic Games">
          <svg width="13" height="15" viewBox="0 0 13 15" aria-hidden="true"><path d="M1 0h11v12l-5.500 2.500L1 12z" fill="#050505" stroke="#333" strokeWidth=".5" /><text x="6.500" y="6.500" fontSize="5" fontWeight="700" textAnchor="middle" fill="#e8e8e8">EPIC</text><path d="M2.500 9h8M5 11.500h3" stroke="#b0b0b0" strokeWidth=".8" /></svg>
        </TaskButton>
        <TaskButton label="Adobe Premiere Pro" running active>
          <span className="flex h-[13px] w-[13px] items-center justify-center rounded-[2px] bg-[#00005b] text-[8px] font-bold leading-none text-[#9a9aff]">Pr</span>
        </TaskButton>
      </div>
      <div className="flex items-center justify-end pr-3 text-[#e0e0e0]">
        <IconButton label="Hidden icons"><MdKeyboardArrowUp size={12} /></IconButton>
        <Glyph w={9} h={9} className="ml-[9px]"><circle cx="4.500" cy="4.500" r="4.300" fill="#e8b568" stroke="none" /><path d="M.3 5.200q2-2 4.200-.4t4.200.2a4.300 4.300 0 0 1-8.400.2z" fill="#7e9bd0" stroke="none" /></Glyph>
        <MdMic size={11} className="ml-[10px] text-[#c87a60]" />
        <Glyph w={12} h={12} className="ml-2"><path d="M7.500 2.500H1.500v6.500h8V7M4 11h4M8.500 1.500h2.500V4a1.200 1.200 0 0 1-2.500 0zM9.700 5v2" strokeWidth=".9" /></Glyph>
        <Volume2 size={11} strokeWidth={2} className="ml-[4px]" />
        <time className="ml-3 text-right font-['Open_Sans'] text-[7px] leading-[10px]">22:49<br />17/02/2026</time>
      </div>
    </footer>
  );
}

export default function App() {
  return (
    <div className="flex h-screen min-h-[480px] flex-col overflow-hidden bg-black font-['Lato',sans-serif]">
      <TitleBar />
      <MenuBar />
      <WorkspaceBar />
      <main className="flex min-h-0 flex-1 flex-col gap-[2px] pt-px">
        <div className="grid min-h-0 flex-1 grid-cols-[448fr_507fr_238fr] gap-[3px] pl-px">
          <div className="flex min-h-0 min-w-0 flex-col gap-[2px]"><ProjectPanel /><KPrimePanel /></div>
          <ProgramPanel />
          <CopyPastaPanel />
        </div>
        <div className="grid h-[223px] shrink-0 grid-cols-[37px_38px_1fr] gap-[2px] pl-px">
          <Meters /><Tools /><Timeline />
        </div>
        <div className="h-3 shrink-0 bg-[#1d1d1d]" />
      </main>
      <Taskbar />
    </div>
  );
}
